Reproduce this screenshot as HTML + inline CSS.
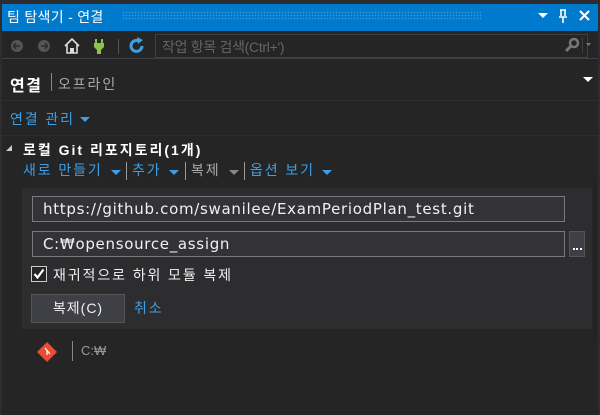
<!DOCTYPE html>
<html><head><meta charset="utf-8"><style>
*{margin:0;padding:0;box-sizing:border-box}
body{width:600px;height:415px;background:#2d2d30;font-family:"Liberation Sans","Noto Sans CJK KR",sans-serif;position:relative;overflow:hidden;color:#f1f1f1}
.a{position:absolute;white-space:nowrap}
.k{letter-spacing:1.9px}
.main{position:absolute;left:2px;top:31px;width:596px;height:384px;background:#252526}
.title{position:absolute;left:2px;top:4px;width:596px;height:27px;background:#007acc}
.dots{position:absolute;left:122px;top:11px;width:360px;height:9px;background-image:radial-gradient(#3a95d8 35%,transparent 40%);background-size:3px 3px}
.blue{color:#3e9ee6}
.inp{position:absolute;background:#333337;border:1px solid #7a7a7a;color:#f1f1f1;font-size:15px;padding-left:10px;line-height:24px;font-family:"DejaVu Sans","Noto Sans CJK KR",sans-serif;letter-spacing:0.7px}
</style></head><body>
<div class="title"></div>
<div class="dots"></div>
<div class="a" style="left:7px;top:7px;font-size:14px;color:#fff;letter-spacing:0.3px">팀 탐색기 - 연결</div>
<div class="a" style="left:538px;top:13px;width:0;height:0;border-left:5px solid transparent;border-right:5px solid transparent;border-top:5px solid #fff"></div>
<svg class="a" style="left:557px;top:9px" width="12" height="15"><path d="M3 1h6M4 1v6M8 1v6M2 8h8M6 8v6" stroke="#fff" stroke-width="1.6" fill="none"/></svg>
<svg class="a" style="left:579px;top:10px" width="11" height="11"><path d="M1 1L10 10M10 1L1 10" stroke="#fff" stroke-width="2"/></svg>
<div class="main"></div>
<svg class="a" style="left:10px;top:38px" width="110" height="16">
<circle cx="7" cy="8" r="6" fill="#555"/><path d="M10 8H4M6 5L3.5 8L6 11" stroke="#2d2d30" stroke-width="1.6" fill="none"/>
<circle cx="34" cy="8" r="6" fill="#555"/><path d="M31 8H37M35 5L37.5 8L35 11" stroke="#2d2d30" stroke-width="1.6" fill="none"/>
<path d="M55 8L62 1L69 8M57 7V15H67V7" stroke="#ddd" stroke-width="1.6" fill="none"/><rect x="60" y="10" width="4" height="5" fill="#ddd"/>
<path d="M86 1v5M92 1v5" stroke="#8bc34a" stroke-width="2"/><path d="M84 5h10v4l-3 3v4h-4v-4l-3-3z" fill="#8bc34a"/>
<rect x="108" y="1" width="1" height="15" fill="#555"/>
</svg>
<svg class="a" style="left:128px;top:36px" width="18" height="20"><path d="M14 10a5.5 5.5 0 1 1-3-5" stroke="#3e9ee6" stroke-width="3" fill="none"/><path d="M9 1l6 3-5 4z" fill="#3e9ee6"/></svg>
<div class="a" style="left:155px;top:34px;width:433px;height:24px;border:1px solid #3f3f46;background:#252526"></div>
<div class="a" style="left:162px;top:37px;font-size:14px;color:#656565;letter-spacing:-0.3px">작업 항목 검색(Ctrl+')</div>
<svg class="a" style="left:563px;top:37px" width="30" height="16"><circle cx="11" cy="6" r="4" stroke="#777" stroke-width="2.5" fill="none"/><path d="M8 9L3 14" stroke="#777" stroke-width="3"/><rect x="19" y="0" width="1" height="16" fill="#3f3f46"/><path d="M23 6h5l-2.5 3z" fill="#777"/></svg>
<div class="a" style="left:2px;top:58px;width:596px;height:1px;background:#3f3f46"></div>
<div class="a" style="left:10px;top:72px;font-size:16px;font-weight:bold;color:#fff;letter-spacing:1.5px">연결</div>
<div class="a" style="left:51px;top:73px;width:1px;height:18px;background:#888"></div>
<div class="a k" style="left:58px;top:74px;font-size:14px;color:#aaa">오프라인</div>
<div class="a" style="left:583px;top:77px;border-left:5px solid transparent;border-right:5px solid transparent;border-top:5px solid #fff"></div>
<div class="a" style="left:2px;top:100px;width:596px;height:1px;background:#2e2e31"></div>
<div class="a blue k" style="left:10px;top:109px;font-size:14px">연결 관리</div>
<div class="a" style="left:80px;top:117px;border-left:5px solid transparent;border-right:5px solid transparent;border-top:5px solid #3e9ee6"></div>
<div class="a" style="left:2px;top:135px;width:596px;height:1px;background:#2e2e31"></div>
<div class="a" style="left:6px;top:145px;border-left:6px solid transparent;border-bottom:6px solid #ccc"></div>
<div class="a" style="left:23px;top:140px;font-size:14px;font-weight:bold;color:#fff;letter-spacing:2px">로컬 Git 리포지토리(1개)</div>
<div class="a k" style="left:23px;top:160px;font-size:14px;color:#3e9ee6">새로 만들기</div>
<div class="a" style="left:111px;top:170px;border-left:5px solid transparent;border-right:5px solid transparent;border-top:5px solid #3e9ee6"></div>
<div class="a" style="left:126px;top:162px;width:1px;height:18px;background:#999"></div>
<div class="a k" style="left:132px;top:160px;font-size:14px;color:#3e9ee6">추가</div>
<div class="a" style="left:169px;top:170px;border-left:5px solid transparent;border-right:5px solid transparent;border-top:5px solid #3e9ee6"></div>
<div class="a" style="left:185px;top:162px;width:1px;height:18px;background:#999"></div>
<div class="a k" style="left:191px;top:160px;font-size:14px;color:#aaa">복제</div>
<div class="a" style="left:229px;top:170px;border-left:5px solid transparent;border-right:5px solid transparent;border-top:5px solid #888"></div>
<div class="a" style="left:244px;top:162px;width:1px;height:18px;background:#999"></div>
<div class="a k" style="left:250px;top:160px;font-size:14px;color:#3e9ee6">옵션 보기</div>
<div class="a" style="left:322px;top:170px;border-left:5px solid transparent;border-right:5px solid transparent;border-top:5px solid #3e9ee6"></div>
<div class="a" style="left:22px;top:188px;width:570px;height:141px;background:#2d2d30"></div>
<div class="inp" style="left:32px;top:196px;width:533px;height:26px">https://github.com/swanilee/ExamPeriodPlan_test.git</div>
<div class="inp" style="left:32px;top:231px;width:533px;height:26px">C:₩opensource_assign</div>
<div class="a" style="left:569px;top:231px;width:16px;height:26px;background:#3f3f46;border:1px solid #555"></div>
<div class="a" style="left:573px;top:248px;width:9px;height:2px;border-left:2px solid #fff;border-right:2px solid #fff;background:linear-gradient(90deg,transparent 1px,#fff 1px,#fff 3px,transparent 3px)"></div>
<div class="a" style="left:31px;top:266px;width:16px;height:16px;border:1px solid #ccc;background:#252526"></div>
<svg class="a" style="left:33px;top:268px" width="12" height="12"><path d="M1.5 6L4.5 9.5L10.5 1.5" stroke="#fff" stroke-width="2.2" fill="none"/></svg>
<div class="a k" style="left:53px;top:265px;font-size:14px;color:#f1f1f1">재귀적으로 하위 모듈 복제</div>
<div class="a" style="left:31px;top:294px;width:94px;height:29px;background:#3f3f46;border:1px solid #555;font-size:14px;text-align:center;line-height:27px;color:#f1f1f1;letter-spacing:1px">복제(C)</div>
<div class="a blue k" style="left:134px;top:298px;font-size:14px">취소</div>
<div class="a" style="left:594px;top:180px;width:1px;height:160px;background:#1e1e1e"></div>
<svg class="a" style="left:36px;top:341px" width="22" height="22"><path d="M11 1L21 11L11 21L1 11Z" fill="#e84d31"/><path d="M9 7l5 6M11 9v5" stroke="#fff" stroke-width="1.2"/></svg>
<div class="a" style="left:72px;top:341px;width:1px;height:20px;background:#888"></div>
<div class="a" style="left:81px;top:343px;font-size:13px;color:#999">C:₩</div>
</body></html>
